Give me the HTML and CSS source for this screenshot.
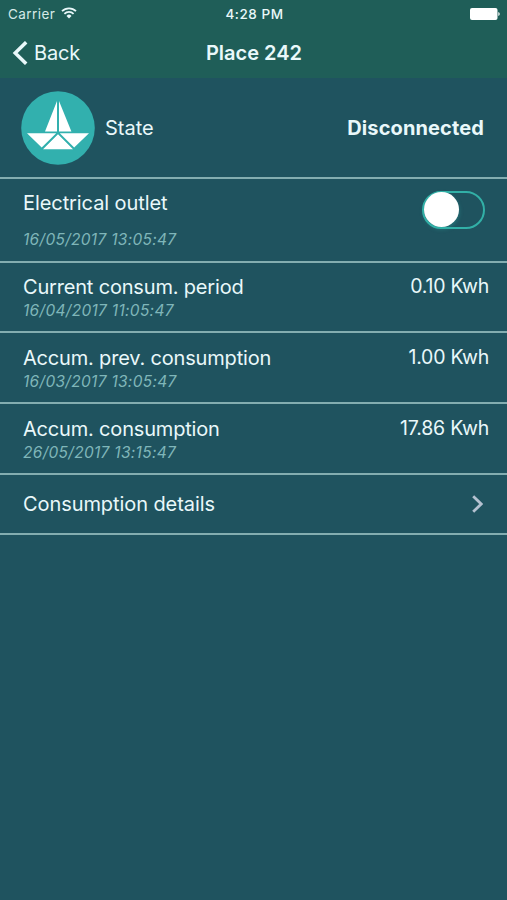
FILE: index.html
```html
<!DOCTYPE html>
<html lang="en">
<head>
<meta charset="utf-8">
<meta name="viewport" content="width=device-width, initial-scale=1">
<title>Place 242</title>
<link rel="stylesheet" href="styles.css">
</head>
<body>
<header class="header">
  <div class="status">
    <div class="carrier"><span>Carrier</span>
      <svg class="wifi" width="16" height="12" viewBox="0 0 16 12" fill="none" stroke="currentColor" stroke-width="1.8"><path d="M1 4.2a10 10 0 0 1 14 0M3.4 6.8a6.5 6.5 0 0 1 9.2 0"/><path d="M5.5 8.9a3.5 3.5 0 0 1 5 0L8 11.4z" fill="currentColor" stroke="none"/></svg>
    </div>
    <time class="clock">4:28 PM</time>
    <svg class="battery" width="31" height="12" viewBox="0 0 31 12" fill="currentColor"><rect width="27.5" height="12" rx="2"/><path d="M28.3 4a2.1 2.1 0 0 1 0 4z"/></svg>
  </div>
  <nav class="nav">
    <a class="back"><svg width="16" height="24" viewBox="0 0 16 24" fill="none" stroke="currentColor" stroke-width="3.5"><path d="M14.2 1.2 3.2 12l11 10.8"/></svg><span>Back</span></a>
    <h1 class="title">Place 242</h1>
  </nav>
</header>
<main>
  <section class="row state">
    <svg class="logo" width="74" height="74" viewBox="0 0 74 74"><circle cx="37" cy="37" r="36.8" fill="#32b0ae"/><g fill="#fff"><path d="M36 10v30.6H24zM38 10v30.6h12.4zM6 42.2h29.2L20.7 56.6zM68 42.2H38.8l14.4 14.4zM37 43.2 52 58.2H22z"/></g></svg>
    <span class="label state-label">State</span>
    <strong class="state-value">Disconnected</strong>
  </section>
  <section class="row outlet">
    <div class="info"><span class="label l-outlet">Electrical outlet</span><em class="date">16/05/2017 13:05:47</em></div>
    <span class="switch"><i class="knob"></i></span>
  </section>
  <section class="row reading current">
    <div class="info"><span class="label l-long">Current consum. period</span><em class="date">16/04/2017 11:05:47</em></div>
    <span class="value">0.10 Kwh</span>
  </section>
  <section class="row reading">
    <div class="info"><span class="label l-long">Accum. prev. consumption</span><em class="date">16/03/2017 13:05:47</em></div>
    <span class="value">1.00 Kwh</span>
  </section>
  <section class="row reading">
    <div class="info"><span class="label l-long">Accum. consumption</span><em class="date">26/05/2017 13:15:47</em></div>
    <span class="value value-wide">17.86 Kwh</span>
  </section>
  <section class="row details">
    <span class="label l-details">Consumption details</span>
    <svg width="11" height="18" viewBox="0 0 11 18" fill="none" stroke="#b4c1d0" stroke-width="2.8"><path d="m1.2 1.2 8 7.8-8 7.8"/></svg>
  </section>
</main>
</body>
</html>
```
FILE: styles.css
```css
* { box-sizing: border-box; }
body {
  margin: 0;
  min-height: 900px;
  background: #1f535f;
  color: #e9f8fa;
  font-family: Inter, "Liberation Sans", sans-serif;
  font-size: 20px;
}
.header { height: 78px; background: #1f5e58; }
.status {
  display: grid;
  grid-template-columns: 1fr auto 1fr;
  align-items: center;
  height: 27px;
  padding: 0 6px 0 8px;
  font-size: 13.5px;
  line-height: 28px;
}
.carrier { display: flex; align-items: center; gap: 6px; color: #d5eae7; letter-spacing: .45px; }
.wifi { color: #e9f8fa; margin-top: -2px; }
.clock { font-size: 13.5px; font-weight: 500; letter-spacing: .55px; }
.battery { justify-self: end; color: #fff; }
.nav {
  display: grid;
  grid-template-columns: 1fr auto 1fr;
  align-items: center;
  height: 51px;
  padding: 0 11px 0 12px;
}
.nav::after { content: ""; }
.back { display: flex; align-items: center; gap: 6px; letter-spacing: -.2px; }
.title { margin: 0; font-size: 20px; font-weight: 600; }
.row {
  display: flex;
  justify-content: space-between;
  border-bottom: 2px solid #83adb0;
  padding: 0 18px 0 23px;
}
.info { display: flex; flex-direction: column; align-items: flex-start; }
.label, .value { line-height: 26px; white-space: nowrap; }
.l-outlet { letter-spacing: -.08px; }
.l-long { letter-spacing: -.18px; }
.l-details { letter-spacing: -.08px; }
.value { font-size: 19.5px; letter-spacing: -.26px; margin-top: -1px; }
.value-wide { letter-spacing: -.2px; }
.date { font-size: 15.5px; letter-spacing: .3px; line-height: 22px; color: #7fb6b9; white-space: nowrap; }
.state { height: 101px; align-items: center; padding: 0 23px 0 21px; }
.state-label { margin-left: 10px; margin-right: auto; }
.state-value { font-weight: 700; letter-spacing: .12px; }
.outlet { height: 84px; padding: 12px 22px 0 23px; }
.outlet .info { gap: 12px; margin-top: -1px; }
.outlet .date { margin-top: 1px; }
.switch {
  width: 63px;
  height: 38px;
  border: 2px solid #32b0a7;
  border-radius: 19px;
}
.knob {
  display: block;
  width: 35px;
  height: 35px;
  margin-top: -1px;
  border-radius: 50%;
  background: #fff;
  box-shadow: 0 2px 4px #32b0a766;
}
.reading { height: 71px; padding-top: 12px; }
.current { height: 70px; padding-top: 11px; }
.details { height: 60px; align-items: center; padding-right: 24px; }
```
